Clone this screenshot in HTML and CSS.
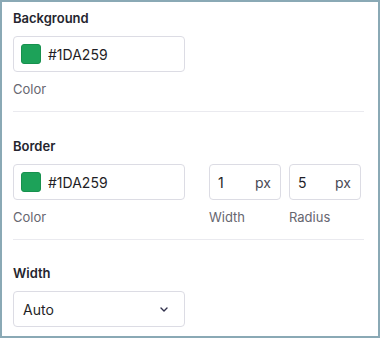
FILE: index.html
```html
<!DOCTYPE html>
<html lang="en">

<head>
    <meta charset="UTF-8">
    <meta name="viewport" content="width=device-width, initial-scale=1.0">
    <title>Style panel</title>
    <link rel="stylesheet" href="styles.css">
</head>

<body>
    <div class="painel">
        <div class="secao primeira">
            <h3>Background</h3>
            <div class="campo cor">
                <span class="amostra"></span>
                <input type="text" value="#1DA259">
            </div>
            <p class="rotulo">Color</p>
        </div>

        <div class="secao">
            <h3>Border</h3>
            <div class="linha">
                <div class="grupo">
                    <div class="campo cor">
                        <span class="amostra"></span>
                        <input type="text" value="#1DA259">
                    </div>
                    <p class="rotulo">Color</p>
                </div>
                <div class="grupo pequeno">
                    <div class="campo numero">
                        <input type="text" value="1">
                        <span class="unidade">px</span>
                    </div>
                    <p class="rotulo">Width</p>
                </div>
                <div class="grupo pequeno">
                    <div class="campo numero">
                        <input type="text" value="5">
                        <span class="unidade">px</span>
                    </div>
                    <p class="rotulo">Radius</p>
                </div>
            </div>
        </div>

        <div class="secao ultima">
            <h3>Width</h3>
            <div class="campo selecao">
                <span>Auto</span>
                <svg width="8" height="5" viewBox="0 0 8 5">
                    <polyline points="1,1 4,4 7,1" fill="none" stroke="#32324d" stroke-width="1.4"
                        stroke-linecap="round" stroke-linejoin="round" />
                </svg>
            </div>
        </div>
    </div>
</body>

</html>
```

FILE: styles.css
```css
* {
    margin: 0;
    padding: 0;
    box-sizing: border-box;
}

body {
    font-family: Inter, "Noto Sans", sans-serif;
    background: #ffffff;
}

.painel {
    width: 380px;
    height: 338px;
    border: 2px solid #8aa9b5;
    padding: 0 14px 0 11px;
}

.secao {
    padding: 26px 0 14px;
    border-bottom: 1px solid #eaeaef;
}

.secao.primeira {
    padding-top: 8px;
}

.secao.ultima {
    padding-top: 25px;
    border-bottom: none;
}

h3 {
    font-size: 13px;
    line-height: 16px;
    font-weight: 600;
    color: #25252e;
    margin-bottom: 10px;
}

.linha {
    display: flex;
}

.grupo {
    margin-right: 24px;
}

.grupo.pequeno {
    margin-right: 8px;
}

.campo {
    display: flex;
    align-items: center;
    height: 36px;
    border: 1px solid #dcdce4;
    border-radius: 4px;
    background: #ffffff;
}

.campo input {
    border: none;
    outline: none;
    background: transparent;
    font-family: inherit;
    font-size: 14px;
    color: #1f1f26;
    min-width: 0;
    flex: 1;
}

.cor {
    width: 172px;
    padding-left: 7px;
}

.amostra {
    width: 20px;
    height: 20px;
    border-radius: 3px;
    background: #1da259;
    border: 1px solid #17914e;
    margin-right: 7px;
}

.numero {
    width: 72px;
    padding: 0 9px 0 8px;
}

.unidade {
    font-size: 14px;
    color: #4a4a55;
}

.selecao {
    width: 172px;
    justify-content: space-between;
    padding: 0 16px 0 9px;
    font-size: 14px;
    color: #1f1f26;
}

.rotulo {
    margin-top: 9px;
    font-size: 13px;
    line-height: 16px;
    color: #666670;
}
```
